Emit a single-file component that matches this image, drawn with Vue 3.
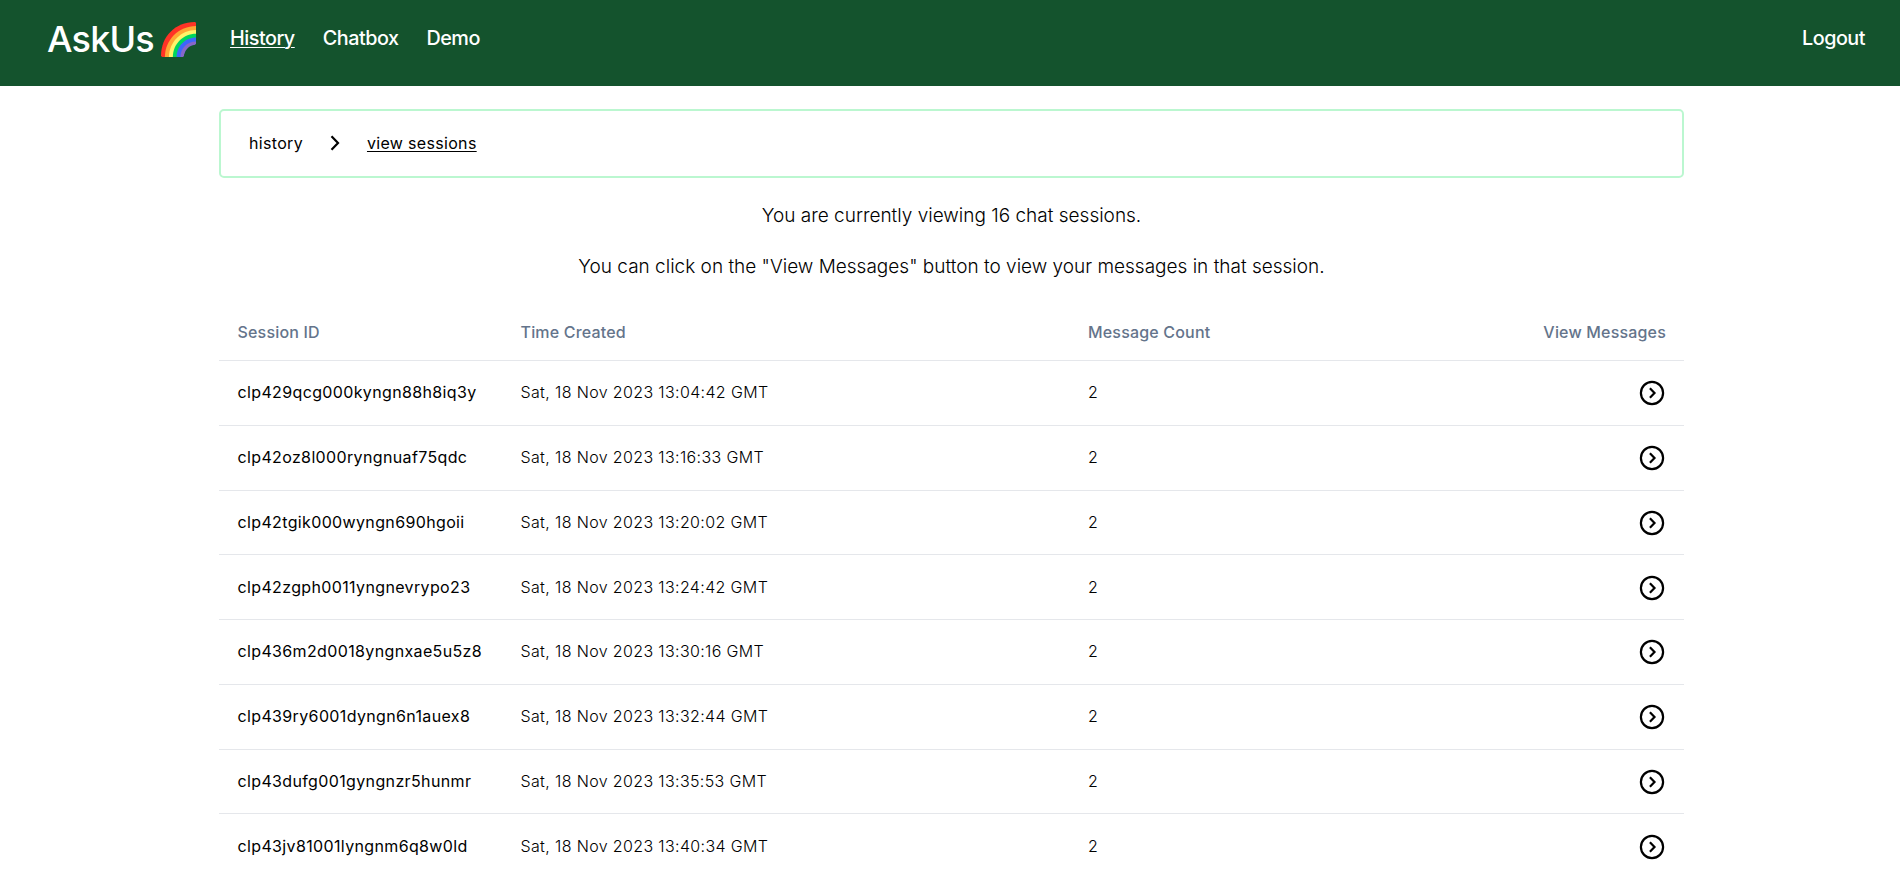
<script setup>
const sessions = [
  { id: 'clp429qcg000kyngn88h8iq3y', time: '13:04:42' },
  { id: 'clp42oz8l000ryngnuaf75qdc', time: '13:16:33' },
  { id: 'clp42tgik000wyngn690hgoii', time: '13:20:02' },
  { id: 'clp42zgph0011yngnevrypo23', time: '13:24:42' },
  { id: 'clp436m2d0018yngnxae5u5z8', time: '13:30:16' },
  { id: 'clp439ry6001dyngn6n1auex8', time: '13:32:44' },
  { id: 'clp43dufg001gyngnzr5hunmr', time: '13:35:53' },
  { id: 'clp43jv81001lyngnm6q8w0ld', time: '13:40:34' },
]
</script>

<template>
  <div class="page">
    <header class="topbar">
      <div class="brand">
        <span class="brand-name">AskUs</span>
        <svg class="rainbow" viewBox="0 0 36 36">
          <path fill="#ff3326" d="M36 1.500A1.500 1.500 0 0 0 34.500 0C15 0 0 15 0 34.500A1.500 1.500 0 0 0 1.500 36H6L36 6Z" />
          <path fill="#ffa834" d="M36 4C18.300 4 4 18.300 4 36H10L36 10Z" />
          <path fill="#fff46a" d="M36 8.200C20.600 8.200 8.200 20.600 8.200 36H14L36 14Z" />
          <path fill="#00d55d" d="M36 12.200C22.800 12.200 12.200 22.800 12.200 36H18L36 18Z" />
          <path fill="#3d66fb" d="M36 16C25 16 16 25 16 36H21L36 21Z" />
          <path fill="#8767c8" d="M36 20C27 20 20 27 20 36H23.500C24.500 29 29 24.500 36 23.500Z" />
          <path fill="#14532d" d="M36 22.500C35 23.500 34 23.800 33 24C28 25.300 25 29 24 33.500C23.800 34.500 23.500 35.500 22.700 36H36Z" />
        </svg>
      </div>
      <nav class="links">
        <a class="current">History</a>
        <a>Chatbox</a>
        <a>Demo</a>
      </nav>
      <a class="logout">Logout</a>
    </header>

    <main class="content">
      <div class="crumbs">
        <span>history</span>
        <svg class="chevron" viewBox="0 0 10 16"><path d="M1.500 1.300L8 8L1.500 14.700" /></svg>
        <span class="crumb-current">view sessions</span>
      </div>
      <p class="lead first">You are currently viewing 16 chat sessions.</p>
      <p class="lead">You can click on the "View Messages" button to view your messages in that session.</p>

      <div class="table">
        <div class="row head">
          <span>Session ID</span>
          <span>Time Created</span>
          <span>Message Count</span>
          <span class="last">View Messages</span>
        </div>
        <div v-for="s in sessions" :key="s.id" class="row">
          <span class="sid">{{ s.id }}</span>
          <span>Sat, 18 Nov 2023 {{ s.time }} GMT</span>
          <span>2</span>
          <span class="last">
            <svg class="go" viewBox="0 0 26 26">
              <circle cx="13" cy="13" r="11.100" />
              <path d="M10.900 8.300L15.500 13L10.900 17.700" />
            </svg>
          </span>
        </div>
      </div>
    </main>
  </div>
</template>

<style>
body {
  margin: 0;
  background: #fff;
}
</style>

<style scoped>
.page {
  height: 876px;
  overflow: hidden;
  font-family: Inter, "Liberation Sans", sans-serif;
  color: #000;
}
.topbar {
  display: flex;
  box-sizing: border-box;
  height: 86px;
  padding: 0 35px 0 47px;
  background: #14532d;
  color: #fff;
  font-size: 19.8px;
  font-weight: 500;
  letter-spacing: -0.495px;
  line-height: 30px;
}
.brand {
  display: flex;
  width: 183px;
}
.brand-name {
  font-size: 36px;
  letter-spacing: -0.8px;
  line-height: 44px;
  margin-top: 17px;
  width: 114px;
  white-space: nowrap;
}
.rainbow {
  width: 35px;
  height: 35px;
  margin-top: 22px;
}
.links {
  display: flex;
  gap: 28px;
  margin-top: 23px;
}
.current,
.crumb-current {
  text-decoration: underline;
  text-underline-offset: 2px;
  text-decoration-thickness: 1px;
}
.logout {
  margin: 23px 0 0 auto;
}
.content {
  width: 1465px;
  margin: 23px 0 0 219px;
}
.crumbs {
  display: flex;
  align-items: center;
  box-sizing: border-box;
  height: 69px;
  padding: 0 28px 2px;
  border: 2px solid #bbf7d0;
  border-radius: 5px;
  font-size: 16px;
  letter-spacing: 0.32px;
}
.chevron {
  width: 10px;
  height: 16px;
  margin: 0 27px;
  fill: none;
  stroke: #000;
  stroke-width: 2.2;
}
.lead {
  margin: 0 0 21px;
  text-align: center;
  font-size: 19px;
  font-weight: 300;
  line-height: 30px;
}
.first {
  margin-top: 23px;
}
.table {
  margin-top: 25px;
}
.row {
  display: grid;
  grid-template-columns: 283px 567.5px 1fr auto;
  align-items: center;
  box-sizing: border-box;
  height: 64.75px;
  padding: 0 18px 1px 18.5px;
  border-bottom: 1px solid #e5e7eb;
  font-size: 16px;
  font-weight: 300;
  letter-spacing: 0.36px;
  white-space: nowrap;
}
.head {
  height: 54px;
  padding-bottom: 4px;
  color: #64748b;
  font-weight: 500;
  letter-spacing: 0.18px;
}
.sid {
  font-weight: 400;
}
.go {
  display: block;
  width: 26px;
  height: 26px;
  margin: 2px 1px 0 0;
  fill: none;
  stroke: #000;
  stroke-width: 2.2;
}
</style>
